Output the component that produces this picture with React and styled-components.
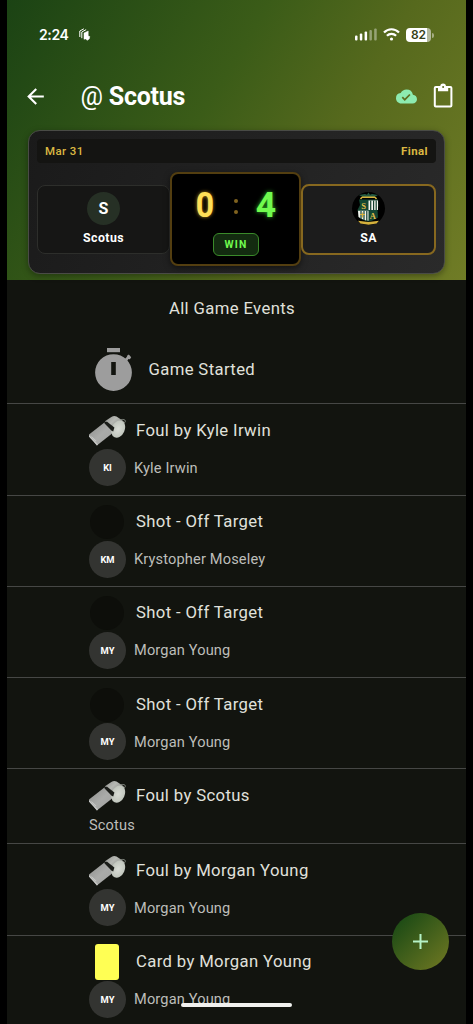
import React from 'react';
import styled, { createGlobalStyle, css } from 'styled-components';
import { MdArrowBack, MdCloudDone } from 'react-icons/md';

const GlobalStyle = createGlobalStyle`
  * {
    box-sizing: border-box;
  }

  body {
    margin: 0;
    background: #000;
    font-family: Roboto, sans-serif;
    -webkit-font-smoothing: antialiased;
  }

  svg {
    flex: none;
  }
`;

// Layout
const Screen = styled.div`
  position: relative;
  width: 459px;
  height: 1024px;
  margin-left: 7px;
  overflow: hidden;
  background: #12140f;
`;

const Header = styled.header`
  height: 280px;
  background: linear-gradient(121.4deg, #1b4314 0%, #3b5c18 42%, #56691d 65%, #707c26 100%);
`;

const StatusBar = styled.div`
  height: 69px;
  padding: 0 35px 0 32px;
  display: flex;
  align-items: center;
  justify-content: space-between;
  color: #fff;
`;

const StatusGroup = styled.div`
  display: flex;
  align-items: center;
  gap: ${(props) => props.$gap}px;
`;

const Clock = styled.span`
  font-family: Inter, sans-serif;
  font-size: 14px;
  font-weight: 600;
  letter-spacing: -0.4px;
`;

const Battery = styled.div`
  position: relative;
  width: 25px;
  height: 14px;
  border-radius: 4px;
  background: linear-gradient(90deg, #fff 82%, #b3b99c 82%);
  color: #354017;
  font-family: Inter, sans-serif;
  font-size: 12px;
  font-weight: 600;
  line-height: 14px;
  text-align: center;

  &::after {
    content: '';
    position: absolute;
    left: 26px;
    top: 5px;
    width: 1.5px;
    height: 5px;
    border-radius: 0 2px 2px 0;
    background: #a5ad83;
  }
`;

const AppBar = styled.div`
  height: 54px;
  padding: 0 13px 0 16px;
  display: flex;
  align-items: center;
  color: #fff;
`;

const Title = styled.h1`
  flex: 1;
  margin: 0 0 0 32.5px;
  padding-top: 2px;
  font-size: 25px;
  font-weight: 700;
  line-height: 30px;
  letter-spacing: -0.22px;

  span {
    font-weight: 400;
  }
`;

const Actions = styled.div`
  display: flex;
  align-items: center;
  gap: 16px;
`;

// Scoreboard
const Scoreboard = styled.section`
  width: 417px;
  height: 144px;
  margin: 7px 0 0 21px;
  padding: 8px;
  border: 1px solid #494b46;
  border-radius: 12px;
  background: linear-gradient(115deg, #1a1a1a, #2a2a2a);
  box-shadow: 0 2px 6px rgba(0, 0, 0, 0.35);
`;

const ScoreHeader = styled.div`
  height: 24px;
  padding: 0 8px;
  display: flex;
  align-items: center;
  justify-content: space-between;
  border-radius: 4px;
  background: #141412;
  color: #dbb842;
  font-size: 11.5px;
  font-weight: 500;
  letter-spacing: 0.4px;

  b {
    font-weight: 700;
  }
`;

const ScoreRow = styled.div`
  margin-top: 9px;
  display: flex;
  align-items: center;
`;

const TeamBox = styled.div`
  flex: 1;
  height: 69px;
  padding-top: 6px;
  display: flex;
  flex-direction: column;
  align-items: center;
  border: 1px solid #2d2e2b;
  border-radius: 8px;
  background: #161615;

  ${(props) =>
    props.$own &&
    css`
      height: 71px;
      border: 2px solid #87681f;
      background: #1c1c1c;
    `}
`;

const TeamLogo = styled.div`
  width: 33px;
  height: 33px;
  display: flex;
  align-items: center;
  justify-content: center;
  border-radius: 50%;
  background: ${(props) => props.$color};
  color: #fff;
  font-size: 16px;
  font-weight: 700;
`;

const TeamName = styled.div`
  margin-top: 5px;
  color: #fff;
  font-size: 12.3px;
  font-weight: 700;
  line-height: 16px;
  letter-spacing: 0.45px;
`;

const ScorePanel = styled.div`
  width: 131px;
  height: 94px;
  display: flex;
  flex-direction: column;
  align-items: center;
  border: 2px solid #533e10;
  border-radius: 8px;
  background: #000;
  box-shadow: 0 2px 6px rgba(0, 0, 0, 0.5);
`;

const Digits = styled.div`
  width: 100%;
  height: 59px;
  padding: 3px 20px 0;
  display: flex;
  align-items: center;
  justify-content: space-between;
`;

const Digit = styled.span`
  width: 26px;
  color: ${(props) => props.$color};
  font-size: 35.5px;
  font-weight: 700;
  line-height: 40px;
  text-align: center;
  text-shadow: 0 0 4px ${(props) => props.$glow};
  transform: scaleX(${(props) => props.$stretch || 1});
`;

const Colon = styled.span`
  margin-top: 3px;
  display: grid;
  gap: 7px;

  &::before,
  &::after {
    content: '';
    width: 4px;
    height: 4px;
    border-radius: 50%;
    background: #80631f;
  }
`;

const Result = styled.div`
  width: 46px;
  height: 23px;
  border: 1px solid #3a8a2a;
  border-radius: 6px;
  background: #132b10;
  color: #70fa4e;
  font-size: 10.4px;
  font-weight: 700;
  line-height: 22px;
  letter-spacing: 1.15px;
  text-align: center;
  text-indent: 1px;
`;

// Events
const ListTitle = styled.h2`
  height: 57px;
  margin: 0;
  padding-right: 9px;
  color: #e0e1dc;
  font-size: 16.7px;
  font-weight: 400;
  line-height: 57px;
  letter-spacing: 0.37px;
  text-align: center;
`;

const StartRow = styled.div`
  height: 67.3px;
  padding-left: 87.5px;
  display: flex;
  align-items: center;
  gap: 17px;
  border-bottom: 1px solid #464745;
`;

const EventRow = styled.div`
  height: ${(props) => (props.$short ? 75 : 91.3)}px;
  padding: 8px 0 0 82px;
  border-bottom: ${(props) => (props.$last ? 0 : 1)}px solid #464745;
`;

const EventTop = styled.div`
  height: 37px;
  display: flex;
  align-items: center;
  gap: 11px;
`;

const IconSlot = styled.div`
  width: 36px;
  height: 37px;
  display: flex;
  align-items: center;
  justify-content: center;
`;

const EventTitle = styled.div`
  color: #e0e1dc;
  font-size: 16.7px;
  letter-spacing: 0.36px;
  line-height: 24px;
`;

const PlayerLine = styled.div`
  display: flex;
  align-items: center;
  gap: 8px;
  color: #bdbeba;
  font-size: 14.6px;
  letter-spacing: 0.15px;
  line-height: 22px;
`;

const Avatar = styled.div`
  width: 37px;
  height: 37px;
  border-radius: 50%;
  background: #333431;
  color: #fff;
  font-size: 9.4px;
  font-weight: 700;
  letter-spacing: 0;
  line-height: 37px;
  text-align: center;
`;

const DarkBall = styled.div`
  width: 34px;
  height: 34px;
  border-radius: 50%;
  background: #0d0e0a;
`;

const YellowCard = styled.div`
  width: 24px;
  height: 36px;
  border-radius: 3px;
  background: #ffff54;
`;

// Floating parts
const AddButton = styled.button`
  position: absolute;
  right: 17px;
  bottom: 54px;
  width: 57px;
  height: 57px;
  padding: 0;
  display: flex;
  align-items: center;
  justify-content: center;
  border: 0;
  border-radius: 50%;
  background: linear-gradient(135deg, #1b4a15 10%, #6d7722 95%);
`;

const HomeIndicator = styled.div`
  position: absolute;
  left: 174px;
  bottom: 17px;
  width: 111px;
  height: 4px;
  border-radius: 2px;
  background: #f1f1ef;
`;

const CardsIcon = () => (
  <svg width="12" height="13" viewBox="0 0 12 13" fill="none" stroke="#fff" strokeLinecap="round" strokeLinejoin="round">
    <path d="M.8 8.600V3L4.500 1" strokeWidth="1" />
    <path d="M2.800 9.800V4l4-2.200" strokeWidth="1" />
    <path d="M5 11V5l4.200-2v5l1.600.6-.6 2.400-1.900 1.300-1.600-1.200z" fill="#fff" strokeWidth=".5" />
  </svg>
);

const SignalIcon = () => (
  <svg width="22" height="13" viewBox="0 0 22 13" fill="#fff">
    <rect x="0" y="7.5" width="2.5" height="5" rx="1" />
    <rect x="4.8" y="5.5" width="2.5" height="7" rx="1" />
    <rect x="9.6" y="3.5" width="2.5" height="9" rx="1" />
    <rect x="14.4" y="2" width="2.5" height="10.5" rx="1" opacity=".4" />
    <rect x="19.2" y="0.5" width="2.5" height="12" rx="1" opacity=".4" />
  </svg>
);

const WifiIcon = () => (
  <svg width="17" height="13" viewBox="0 0 17 13" fill="none" stroke="#fff" strokeWidth="2.2">
    <path d="M1 4.6C5.2.1 11.8.1 16 4.6" />
    <path d="M3.9 7.8c2.6-2.7 6.6-2.7 9.2 0" />
    <circle cx="8.5" cy="11" r="1.6" fill="#fff" stroke="none" />
  </svg>
);

const ClipboardIcon = () => (
  <svg width="20" height="26" viewBox="0 0 20 26">
    <rect x="1.8" y="4" width="16.6" height="19.4" rx="1" fill="none" stroke="#fff" strokeWidth="2" />
    <path d="M5 3.5h2.2a2.9 2.9 0 0 1 5.800 0h2.200v4.700H5z" fill="#fff" />
    <circle cx="10.1" cy="3.9" r="1" fill="#56691d" />
  </svg>
);

const StopwatchIcon = () => (
  <svg width="37" height="44" viewBox="0 0 37 44" fill="#9d9d9d">
    <rect x="12" y="0" width="13" height="4.2" />
    <path d="M29 12l3.200-3.400-.5-.6 2.100-1.500 2.400 2.800-1.300 2-1.400-.4-2.200 3z" />
    <path fillRule="evenodd" d="M18.5 6.2a18.4 18.4 0 1 0 0 36.8 18.4 18.4 0 0 0 0-36.8zM16.2 14h4.6v13h-4.6z" />
  </svg>
);

const WhistleIcon = () => (
  <svg width="38" height="32" viewBox="0 0 38 32">
    <defs>
      <linearGradient id="whistleTube" x1="0" y1="0" x2="1" y2="1">
        <stop offset="0.1" stopColor="#929391" />
        <stop offset="0.5" stopColor="#aaaba9" />
        <stop offset="1" stopColor="#a0a19f" />
      </linearGradient>
      <linearGradient id="whistleCap" x1="0" y1="0" x2="1" y2="0.7">
        <stop offset="0" stopColor="#91928f" />
        <stop offset="0.45" stopColor="#b6b8b3" />
        <stop offset="1" stopColor="#858782" />
      </linearGradient>
      <radialGradient id="whistleBowl">
        <stop offset="0" stopColor="#d9dcd5" />
        <stop offset="1" stopColor="#c0c5bc" />
      </radialGradient>
    </defs>
    <ellipse cx="34.8" cy="6.2" rx="2.6" ry="1.8" fill="none" stroke="#7b8078" strokeWidth="1" />
    <path d="M1 19.6L16.4 7.4l9.6 8.8-3.2 3.2L8.8 30.6z" fill="url(#whistleTube)" />
    <path d="M1 19.6v2.2l8 8.8 1-1.1z" fill="#c7c8c6" />
    <path d="M3.6 21.5l4.6 4.6" stroke="#d3d4d2" strokeWidth=".7" />
    <path d="M17 6.3l6.3-4.4c1.8-1.1 3.600-1.300 5.200-.4l6.400 4.200c1.500 1.200 2.100 3.200 1.500 5L27 14.800z" fill="url(#whistleCap)" />
    <ellipse cx="30.2" cy="14.1" rx="6.5" ry="9" transform="rotate(24 30.2 14.1)" fill="url(#whistleBowl)" />
    <path d="M16.4 8.2l2.4-1.8 7.6 6-1.2 4-1.6-.7z" fill="#1b1d19" />
  </svg>
);

const CrestIcon = () => (
  <svg width="33" height="33" viewBox="0 0 33 33">
    <path d="M7 3l6-1 2 .8L16.5.5 18 2.8l2-.8 6 1-3.5 2h-12z" fill="#245a42" />
    <path d="M10 5.2h13M10 5.2L8.5 7M23 5.2L24.5 7" fill="none" stroke="#d8b33d" strokeWidth="1.5" />
    <path d="M7 7.5h19l.5 6-1 4 .5 8c-3 2-6 3.500-9.500 4C13 29 10 27.500 7 25.500L5.500 18 8 13z" fill="#154733" />
    <path d="M16.5 8.5H26V18h-9.5zM6 18.8h10.5v10C12 28 9 27 6.5 25z" fill="#f4f4ee" />
    <path d="M18.7 8.5V18M21.6 8.5V18M24.2 8.5V18M9 19v8M12 19v9M14.8 19v10" stroke="#113e2c" strokeWidth="1.2" />
    <path d="M8 22.5h5M10.5 20.5v5" stroke="#d8b33d" strokeWidth="1" />
    <path d="M6 28.8L16.5 30 27 28.8l-2.5 2.700-8 1.200-8-1.200z" fill="#d5b13c" />
    <text x="11.6" y="16.6" textAnchor="middle" fill="#e2bf48" fontFamily="Liberation Serif, serif" fontSize="8.5" fontWeight="700">S</text>
    <text x="20.9" y="26.5" textAnchor="middle" fill="#e2bf48" fontFamily="Liberation Serif, serif" fontSize="8.5" fontWeight="700">A</text>
  </svg>
);

const PlusIcon = () => (
  <svg width="15" height="15" viewBox="0 0 15 15" stroke="#b5f2c6" strokeWidth="2">
    <path d="M7.5 0v15M0 7.5h15" />
  </svg>
);

const icons = {
  foul: <WhistleIcon />,
  shot: <DarkBall />,
  card: <YellowCard />,
};

const events = [
  { type: 'foul', title: 'Foul by Kyle Irwin', player: 'Kyle Irwin', initials: 'KI' },
  { type: 'shot', title: 'Shot - Off Target', player: 'Krystopher Moseley', initials: 'KM' },
  { type: 'shot', title: 'Shot - Off Target', player: 'Morgan Young', initials: 'MY' },
  { type: 'shot', title: 'Shot - Off Target', player: 'Morgan Young', initials: 'MY' },
  { type: 'foul', title: 'Foul by Scotus', player: 'Scotus' },
  { type: 'foul', title: 'Foul by Morgan Young', player: 'Morgan Young', initials: 'MY' },
  { type: 'card', title: 'Card by Morgan Young', player: 'Morgan Young', initials: 'MY' },
];

const App = () => {
  return (
    <>
      <GlobalStyle />
      <Screen>
        <Header>
          <StatusBar>
            <StatusGroup $gap={11}>
              <Clock>2:24</Clock>
              <CardsIcon />
            </StatusGroup>
            <StatusGroup $gap={6}>
              <SignalIcon />
              <WifiIcon />
              <Battery>82</Battery>
            </StatusGroup>
          </StatusBar>

          <AppBar>
            <MdArrowBack size={25} />
            <Title><span>@</span> Scotus</Title>
            <Actions>
              <MdCloudDone size={21} color="#8debb0" />
              <ClipboardIcon />
            </Actions>
          </AppBar>

          <Scoreboard>
            <ScoreHeader>
              <span>Mar 31</span>
              <b>Final</b>
            </ScoreHeader>
            <ScoreRow>
              <TeamBox>
                <TeamLogo $color="#263025">S</TeamLogo>
                <TeamName>Scotus</TeamName>
              </TeamBox>
              <ScorePanel>
                <Digits>
                  <Digit $color="#ffdf57" $glow="#b88a1c" $stretch={0.9}>0</Digit>
                  <Colon />
                  <Digit $color="#70fa4e" $glow="#2fae26">4</Digit>
                </Digits>
                <Result>WIN</Result>
              </ScorePanel>
              <TeamBox $own>
                <TeamLogo $color="#000"><CrestIcon /></TeamLogo>
                <TeamName>SA</TeamName>
              </TeamBox>
            </ScoreRow>
          </Scoreboard>
        </Header>

        <ListTitle>All Game Events</ListTitle>
        <StartRow>
          <StopwatchIcon />
          <EventTitle>Game Started</EventTitle>
        </StartRow>
        {events.map((event, index) => (
          <EventRow key={index} $short={!event.initials} $last={index === events.length - 1}>
            <EventTop>
              <IconSlot>{icons[event.type]}</IconSlot>
              <EventTitle>{event.title}</EventTitle>
            </EventTop>
            <PlayerLine>
              {event.initials && <Avatar>{event.initials}</Avatar>}
              <span>{event.player}</span>
            </PlayerLine>
          </EventRow>
        ))}

        <AddButton aria-label="Add event">
          <PlusIcon />
        </AddButton>
        <HomeIndicator />
      </Screen>
    </>
  );
};

export default App;
